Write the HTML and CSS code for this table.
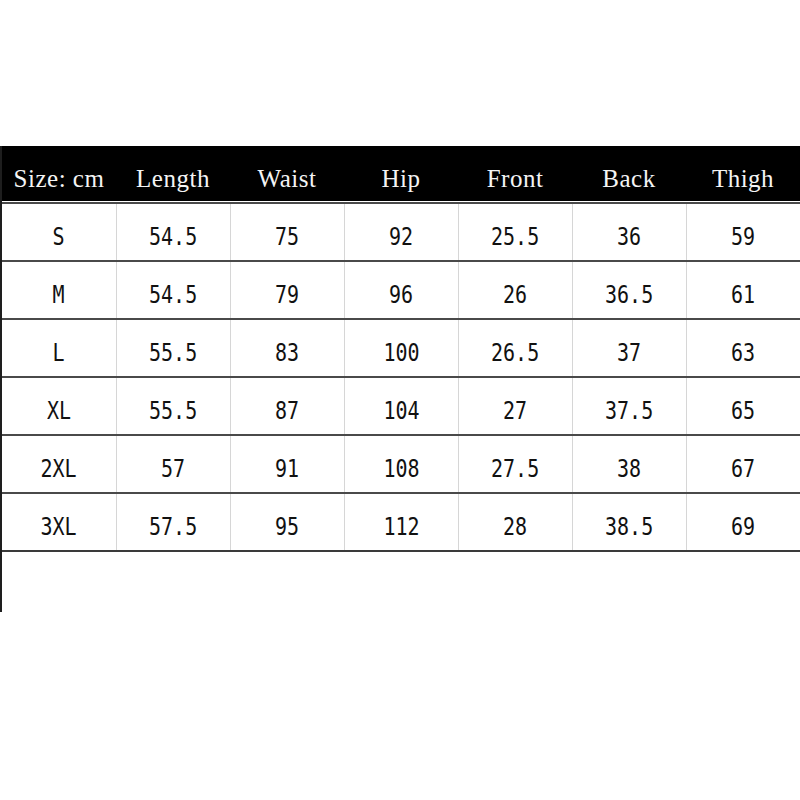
FILE: index.html
```html
<!DOCTYPE html>
<html>
<head>
<meta charset="utf-8">
<link rel="stylesheet" href="styles.css">
</head>
<body>
<div class="sheet">
  <div class="head">
    <div class="hc">Size: cm</div>
    <div class="hc">Length</div>
    <div class="hc">Waist</div>
    <div class="hc">Hip</div>
    <div class="hc">Front</div>
    <div class="hc">Back</div>
    <div class="hc">Thigh</div>
  </div>
  <div class="row"><div class="c"><span>S</span></div><div class="c"><span>54.5</span></div><div class="c"><span>75</span></div><div class="c"><span>92</span></div><div class="c"><span>25.5</span></div><div class="c"><span>36</span></div><div class="c"><span>59</span></div></div>
  <div class="row"><div class="c"><span>M</span></div><div class="c"><span>54.5</span></div><div class="c"><span>79</span></div><div class="c"><span>96</span></div><div class="c"><span>26</span></div><div class="c"><span>36.5</span></div><div class="c"><span>61</span></div></div>
  <div class="row"><div class="c"><span>L</span></div><div class="c"><span>55.5</span></div><div class="c"><span>83</span></div><div class="c"><span>100</span></div><div class="c"><span>26.5</span></div><div class="c"><span>37</span></div><div class="c"><span>63</span></div></div>
  <div class="row"><div class="c"><span>XL</span></div><div class="c"><span>55.5</span></div><div class="c"><span>87</span></div><div class="c"><span>104</span></div><div class="c"><span>27</span></div><div class="c"><span>37.5</span></div><div class="c"><span>65</span></div></div>
  <div class="row"><div class="c"><span>2XL</span></div><div class="c"><span>57</span></div><div class="c"><span>91</span></div><div class="c"><span>108</span></div><div class="c"><span>27.5</span></div><div class="c"><span>38</span></div><div class="c"><span>67</span></div></div>
  <div class="row"><div class="c"><span>3XL</span></div><div class="c"><span>57.5</span></div><div class="c"><span>95</span></div><div class="c"><span>112</span></div><div class="c"><span>28</span></div><div class="c"><span>38.5</span></div><div class="c"><span>69</span></div></div>
</div>
</body>
</html>
```

FILE: styles.css
```css
html, body {
  margin: 0;
  padding: 0;
  background: #fff;
}

.sheet {
  margin-top: 146px;
  height: 466px;
  border-left: 2px solid #1e1e1e;
  box-sizing: border-box;
}

.head {
  display: grid;
  grid-template-columns: repeat(7, 1fr);
  height: 55px;
  background: #000;
  color: #f4f4f4;
  font-family: "Liberation Serif", "Times New Roman", serif;
  font-size: 25px;
  border-bottom: 1px solid #fff;
}

.hc {
  display: flex;
  align-items: center;
  justify-content: center;
  padding-top: 10px;
  box-sizing: border-box;
  letter-spacing: 0.5px;
  white-space: pre;
}

.row {
  display: grid;
  grid-template-columns: repeat(7, 1fr);
  height: 58px;
  border-top: 2px solid #4a4a4a;
  box-sizing: border-box;
}

.row:last-child {
  border-bottom: 2px solid #3a3a3a;
  height: 60px;
}

.c {
  display: flex;
  align-items: center;
  justify-content: center;
  padding-top: 8px;
  box-sizing: border-box;
  border-left: 1px solid #d6d6d6;
  font-family: "DejaVu Sans Mono", "Liberation Mono", monospace;
  font-size: 25px;
  color: #111;
}

.c span {
  display: inline-block;
  transform: scaleX(0.8);
}

.c:first-child {
  border-left: none;
}
```
